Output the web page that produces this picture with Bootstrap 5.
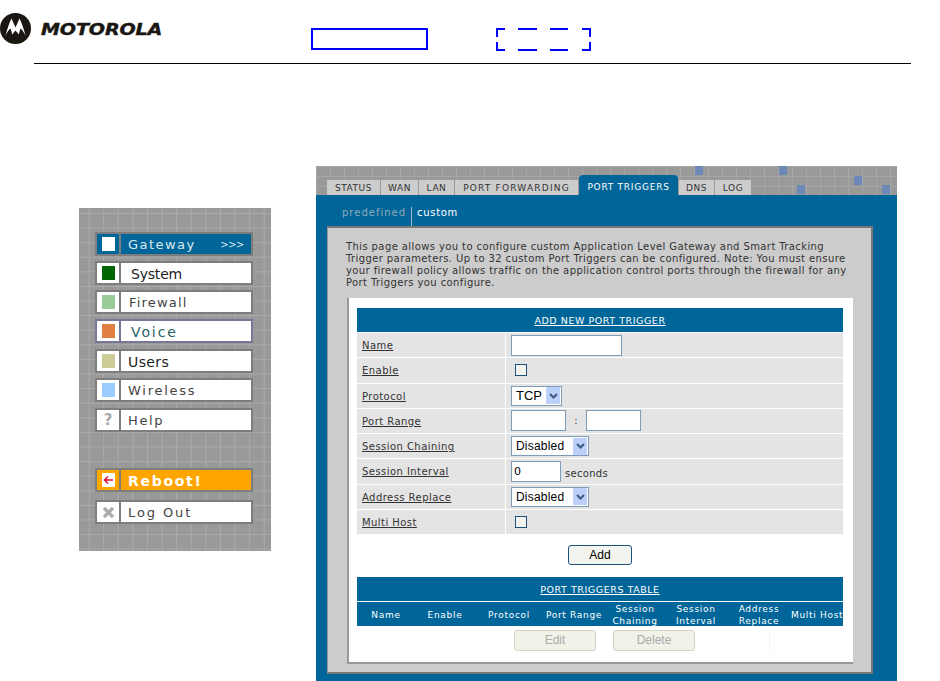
<!DOCTYPE html>
<html lang="en">
<head>
<meta charset="utf-8">
<title>Port Triggers</title>
<link href="https://cdn.jsdelivr.net/npm/bootstrap@5.3.0/dist/css/bootstrap.min.css" rel="stylesheet">
<style>
html,body{height:681px;overflow:hidden;background:#fff;}
body{font-family:"DejaVu Sans",Verdana,sans-serif;font-size:10px;color:#333;line-height:12px;}
a{color:inherit;}
.top-head{height:63px;padding-top:13px;}
.logo-name{font:italic 700 15.5px/1 "DejaVu Sans",sans-serif;letter-spacing:-.1px;color:#1a1712;margin-left:9px;margin-top:10px;width:122px;transform:scaleX(1.23);transform-origin:left;white-space:nowrap;-webkit-text-stroke:.4px #1a1712;}
.logo-area{width:311px;}
.logo-oval{width:32px;height:31px;display:block;}
.frame-solid{width:117px;height:22px;border:2px solid #00f;margin-top:15px;}
.frame-dash{width:95px;height:23px;margin-top:15px;margin-left:68px;}
.head-rule{height:1px;background:#000;margin:0 29px 0 34px;}
.main-area{padding-left:79px;}
.side-panel{width:192px;height:343px;margin-top:144px;padding:24px 18px 0 16px;background-color:#999;
background-image:linear-gradient(#aaa 1px,transparent 1px),linear-gradient(90deg,#aaa 1px,transparent 1px);background-size:14.6px 14.6px;background-position:-5px 5px;}
.side-item{height:24px;width:158px;border:2px solid #7d7d7d;background:#fff;margin-bottom:5px;font-size:13px;line-height:22px;color:#444;box-sizing:border-box;}
.side-icon{width:24px;flex:none;border-right:2px solid #7d7d7d;display:flex;align-items:center;justify-content:center;}
.swatch{width:13px;height:14px;display:block;}
.side-label{padding-left:7px;white-space:nowrap;flex:1;}
.is-blue{background:#069;color:#dbe8f0;}
.is-blue .side-label{display:flex;justify-content:space-between;padding-right:7px;letter-spacing:1.45px;}
.arrows{font-size:10px;letter-spacing:-.5px;}
.is-orange{background:#ffa500;color:#fff;font-weight:700;}
.lab-sys{padding-left:10px;color:#222;letter-spacing:-.2px;font-size:14px;}
.lab-fire{padding-left:8px;letter-spacing:1.2px;}
.lab-voice{padding-left:10px;color:#1f5f66;letter-spacing:1.9px;font-size:14px;}
.lab-users{color:#222;letter-spacing:.4px;font-size:14px;}
.lab-wire{letter-spacing:1.75px;}
.lab-help{letter-spacing:1.65px;}
.lab-boot{letter-spacing:1.7px;font-size:14px;}
.lab-out{letter-spacing:1.9px;}
.voice-line{border-color:#77779a;}
.voice-line .side-icon{border-color:#77779a;}
.mt-six{margin-top:6px;}
.mt-reboot{margin-top:36px;}
.mt-logout{margin-top:8px;}
.glyph{font:700 15px/1 "DejaVu Sans",sans-serif;color:#aaa;}
.router-panel{width:581px;height:515px;margin-top:102px;margin-left:45px;background:#069;position:relative;}
.tab-strip{height:29px;padding-left:11px;gap:1px;align-items:flex-end;background-color:#999;
background-image:linear-gradient(#a6a6a6 1px,transparent 1px),linear-gradient(90deg,#a6a6a6 1px,transparent 1px);background-size:14px 10px;}
.tab-item{display:block;height:15px;background:#ccc;color:#333;text-decoration:none;font-size:9px;line-height:16px;text-align:center;letter-spacing:.55px;white-space:nowrap;}
.tab-on{height:20px;line-height:25px;background:#069;color:#fff;border-radius:4px 4px 0 0;letter-spacing:.75px;}
.w-status{width:53px}.w-wan{width:37px}.w-lan{width:35px}.w-pf{width:123px;letter-spacing:1.2px}.w-pt{width:99px}.w-dns{width:35px}.w-log{width:36px}
.pix{position:absolute;width:8px;height:9px;background:#6c88b8;}
.pix-a{left:379px;top:0}.pix-b{left:463px;top:0}.pix-c{left:538px;top:10px}.pix-d{left:481px;top:19px}.pix-e{left:566px;top:19px}
.sub-nav{height:31px;padding:12px 0 0 26px;font-size:10px;letter-spacing:1px;color:#8fa9ba;line-height:11px;}
.sub-on{color:#fff;border-left:1px solid #9dbccd;padding-left:5px;margin-left:5px;letter-spacing:.7px;}
.gray-box{margin-left:11px;width:546px;height:448px;background:#ccc;border-top:2px solid #777;border-right:2px solid #777;border-bottom:2px solid #777;border-left:1px solid #999;padding:13px 0 0 18px;position:relative;}
.intro{margin:0;font-size:10px;line-height:12px;letter-spacing:.4px;color:#333;white-space:nowrap;}
.white-box{margin:9px 0 0 1px;width:506px;height:366px;background:#fff;border-left:2px solid #999;border-bottom:2px solid #999;padding:10px 10px 0 8px;}
.blue-head{height:24px;background:#069;color:#fff;text-align:center;line-height:25px;font-size:9.5px;letter-spacing:.55px;}
.form-line{height:25.25px;background:#e4e4e4;border-top:1px solid #fff;display:flex;}
.form-key{width:149px;padding-left:5px;border-right:1px solid #fff;line-height:25px;white-space:nowrap;letter-spacing:.45px;}
.form-val{padding-left:5px;display:flex;align-items:center;flex:1;}
.field{display:block;height:21px;border:1px solid #7d9cb8;background:#fff;padding:0 0 0 2px;margin:0;font:11px "DejaVu Sans",sans-serif;color:#000;border-radius:0;}
.fld-111{width:111px}.fld-55{width:55px}.fld-50{width:50px}
.check-box{width:12px;height:12px;margin-left:4px;border:1px solid #1c4f7c;background:#f2f2ee;display:block;}
.drop-box{height:20px;border:1px solid #7d9cb8;background:#fff;display:flex;align-items:center;justify-content:space-between;padding:0 1px 0 4px;font:12px "Liberation Sans",sans-serif;color:#000;}
.drop-tcp{width:51px;font-size:13px}.drop-dis{width:78px;letter-spacing:.2px}
.drop-btn{width:14px;height:17px;background:#bcd0fa;display:flex;align-items:center;justify-content:center;border-radius:1px;}
.sep{width:20px;text-align:center;}
.unit{margin-left:4px;margin-top:6px;letter-spacing:.3px;}
.btn-add{width:64px;height:20px;padding:0;background:#f4f4ee;border:1px solid #1c4f7c;border-radius:3px;font:12px/16px "Liberation Sans",sans-serif;color:#000;display:block;}
.add-line{height:43px;display:flex;justify-content:center;padding:11px 0 0 0;}
.head-cells{height:25px;background:#069;border-top:1px solid #fff;color:#fff;font-size:9px;line-height:12px;letter-spacing:.7px;display:flex;text-align:center;align-items:center;padding-top:1px;}
.head-cells span{display:block;white-space:nowrap;}
.c1{width:58px}.c2{width:60px}.c3{width:68px}.c4{width:62px}.c5{width:60px}.c6{width:62px}.c7{width:64px}.c8{width:52px;}
.btn-row{padding:4px 0 0 157px;gap:17px;}
.btn-off{--bs-btn-disabled-bg:#f2f2e9;--bs-btn-disabled-border-color:#d3d3c4;--bs-btn-disabled-color:#aaa;--bs-btn-disabled-opacity:1;width:82px;height:21px;padding:0;font:12px/17px "Liberation Sans",sans-serif;border-radius:3px;}
.faint-bar{width:1px;height:21px;background:#f2f2f2;margin-left:57px;}
</style>
</head>
<body>
<header class="top-head d-flex">
  <div class="logo-area d-flex">
    <svg class="logo-oval" viewBox="0 0 32 31" aria-hidden="true">
      <ellipse cx="15.5" cy="15.500" rx="15.500" ry="15.500" fill="#1a1712"/>
      <path d="M5.500 23 C7 17 9 10 11.500 5.500 L15.500 14.500 L19.500 5.500 C22 10 24 17 25.500 23 C24 19.500 22.500 17 20.500 15.500 C19.800 17.500 19.200 19.500 18.800 21.500 L15.500 17.500 L12.200 21.500 C11.800 19.500 11.200 17.500 10.500 15.500 C8.500 17 7 19.500 5.500 23Z" fill="#fff"/>
    </svg>
    <div class="logo-name">MOTOROLA</div>
  </div>
  <div class="frame-solid"></div>
  <svg class="frame-dash" viewBox="0 0 95 23" aria-hidden="true">
    <path d="M9 1H1V9M1 14V22H9M22 1H41M54 1H72M86 1H94V9M94 14V22H86M22 22H41M54 22H72" fill="none" stroke="#00f" stroke-width="2"/>
  </svg>
</header>
<div class="head-rule"></div>

<main class="main-area d-flex align-items-start">
  <nav class="side-panel">
    <div class="side-item is-blue d-flex"><span class="side-icon"><i class="swatch" style="background:#fff"></i></span><span class="side-label">Gateway<span class="arrows">&gt;&gt;&gt;</span></span></div>
    <div class="side-item d-flex"><span class="side-icon"><i class="swatch" style="background:#006400"></i></span><span class="side-label lab-sys">System</span></div>
    <div class="side-item d-flex"><span class="side-icon"><i class="swatch" style="background:#9c9"></i></span><span class="side-label lab-fire">Firewall</span></div>
    <div class="side-item voice-line d-flex"><span class="side-icon"><i class="swatch" style="background:#e08040"></i></span><span class="side-label lab-voice">Voice</span></div>
    <div class="side-item mt-six d-flex"><span class="side-icon"><i class="swatch" style="background:#cc9"></i></span><span class="side-label lab-users">Users</span></div>
    <div class="side-item d-flex"><span class="side-icon"><i class="swatch" style="background:#9cf"></i></span><span class="side-label lab-wire">Wireless</span></div>
    <div class="side-item mt-six d-flex"><span class="side-icon"><span class="glyph">?</span></span><span class="side-label lab-help">Help</span></div>
    <div class="side-item is-orange mt-reboot d-flex"><span class="side-icon"><svg width="13" height="14" viewBox="0 0 13 14" aria-hidden="true"><rect width="13" height="14" fill="#fff"/><path d="M2.500 7H11M6 3.500L2.500 7L6 10.500" fill="none" stroke="#e01030" stroke-width="1.500"/></svg></span><span class="side-label lab-boot">Reboot!</span></div>
    <div class="side-item mt-logout d-flex"><span class="side-icon"><svg width="13" height="13" viewBox="0 0 13 13" aria-hidden="true"><path d="M2 2L11 11M11 2L2 11" stroke="#aaa" stroke-width="3.200"/></svg></span><span class="side-label lab-out">Log Out</span></div>
  </nav>

  <section class="router-panel">
    <i class="pix pix-a"></i><i class="pix pix-b"></i><i class="pix pix-c"></i><i class="pix pix-d"></i><i class="pix pix-e"></i>
    <div class="nav tab-strip flex-nowrap">
      <a class="tab-item w-status" href="#">STATUS</a>
      <a class="tab-item w-wan" href="#">WAN</a>
      <a class="tab-item w-lan" href="#">LAN</a>
      <a class="tab-item w-pf" href="#">PORT FORWARDING</a>
      <a class="tab-item tab-on w-pt" href="#">PORT TRIGGERS</a>
      <a class="tab-item w-dns" href="#">DNS</a>
      <a class="tab-item w-log" href="#">LOG</a>
    </div>
    <div class="sub-nav d-flex"><span>predefined</span><span class="sub-on">custom</span></div>
    <div class="gray-box">
      <p class="intro">This page allows you to configure custom Application Level Gateway and Smart Tracking<br>Trigger parameters. Up to 32 custom Port Triggers can be configured. Note: You must ensure<br>your firewall policy allows traffic on the application control ports through the firewall for any<br>Port Triggers you configure.</p>
      <div class="white-box">
        <div class="blue-head"><a href="#">ADD NEW PORT TRIGGER</a></div>
        <div class="form-line"><div class="form-key"><a href="#">Name</a></div><div class="form-val"><input class="field fld-111" type="text" aria-label="Name"></div></div>
        <div class="form-line"><div class="form-key"><a href="#">Enable</a></div><div class="form-val"><i class="check-box"></i></div></div>
        <div class="form-line"><div class="form-key"><a href="#">Protocol</a></div><div class="form-val"><span class="drop-box drop-tcp">TCP<span class="drop-btn"><svg width="9" height="6" viewBox="0 0 9 6" aria-hidden="true"><path d="M1 1L4.500 4.500L8 1" fill="none" stroke="#3a5a80" stroke-width="2"/></svg></span></span></div></div>
        <div class="form-line"><div class="form-key"><a href="#">Port Range</a></div><div class="form-val"><input class="field fld-55" type="text" aria-label="Port start"><span class="sep">:</span><input class="field fld-55" type="text" aria-label="Port end"></div></div>
        <div class="form-line"><div class="form-key"><a href="#">Session Chaining</a></div><div class="form-val"><span class="drop-box drop-dis">Disabled<span class="drop-btn"><svg width="9" height="6" viewBox="0 0 9 6" aria-hidden="true"><path d="M1 1L4.500 4.500L8 1" fill="none" stroke="#3a5a80" stroke-width="2"/></svg></span></span></div></div>
        <div class="form-line"><div class="form-key"><a href="#">Session Interval</a></div><div class="form-val"><input class="field fld-50" type="text" value="0" aria-label="Session interval"><span class="unit">seconds</span></div></div>
        <div class="form-line"><div class="form-key"><a href="#">Address Replace</a></div><div class="form-val"><span class="drop-box drop-dis">Disabled<span class="drop-btn"><svg width="9" height="6" viewBox="0 0 9 6" aria-hidden="true"><path d="M1 1L4.500 4.500L8 1" fill="none" stroke="#3a5a80" stroke-width="2"/></svg></span></span></div></div>
        <div class="form-line"><div class="form-key"><a href="#">Multi Host</a></div><div class="form-val"><i class="check-box"></i></div></div>
        <div class="add-line"><button class="btn btn-add" type="button">Add</button></div>
        <div class="blue-head"><a href="#">PORT TRIGGERS TABLE</a></div>
        <div class="head-cells">
          <span class="c1">Name</span><span class="c2">Enable</span><span class="c3">Protocol</span><span class="c4">Port Range</span><span class="c5">Session<br>Chaining</span><span class="c6">Session<br>Interval</span><span class="c7">Address<br>Replace</span><span class="c8">Multi Host</span>
        </div>
        <div class="btn-row d-flex">
          <button class="btn btn-off" type="button" disabled>Edit</button>
          <button class="btn btn-off" type="button" disabled>Delete</button>
          <i class="faint-bar"></i>
        </div>
      </div>
    </div>
  </section>
</main>
<script src="https://cdn.jsdelivr.net/npm/bootstrap@5.3.0/dist/js/bootstrap.bundle.min.js"></script>
</body>
</html>
